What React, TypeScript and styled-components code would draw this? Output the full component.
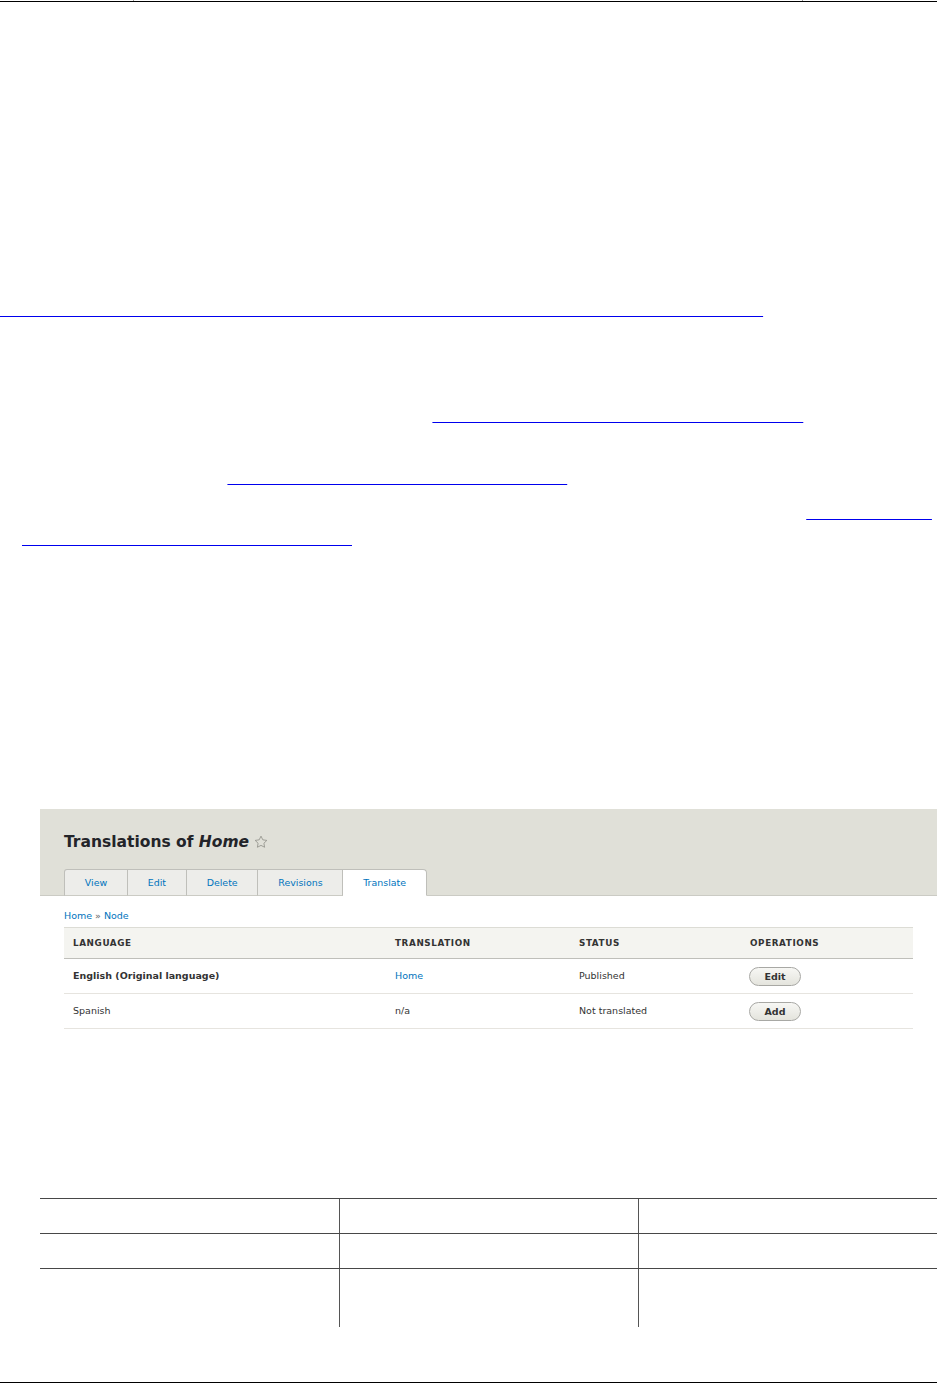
import React from 'react'
import styled, { createGlobalStyle } from 'styled-components'

const GlobalStyle = createGlobalStyle`
  html, body {
    margin: 0;
    padding: 0;
    background: #fff;
    overflow: hidden;
  }
  body {
    font-family: "Liberation Sans", Arial, sans-serif;
    font-size: 16px;
    line-height: 26px;
    color: transparent;
  }
`

const Page = styled.div`
  width: 937px;
`

/* remnant of the table that ends right at the top of the view */
const TopTable = styled.div`
  display: grid;
  grid-template-columns: 133px 669px 1fr;
  border-bottom: 1px solid #000;
`

const TopCell = styled.div<{ $first?: boolean }>`
  height: 1px;
  border-left: ${({ $first }) => ($first ? 'none' : '1px solid #9a9a9a')};
`

const Title = styled.h2`
  margin: 40px 0 20px;
  font-size: 28px;
  line-height: 36px;
  font-weight: bold;
`

const Para = styled.p<{ $mt?: number; $mb?: number }>`
  margin: ${({ $mt = 0 }) => $mt}px 0 ${({ $mb = 0 }) => $mb}px;
`

const SubTitle = styled.h3`
  margin: 36px 0 0;
  font-size: 22px;
  line-height: 30px;
`

const DocLink = styled.a`
  color: transparent;
  text-decoration: underline;
  text-decoration-color: #0000ee;
  text-decoration-skip-ink: none;
`

const Steps = styled.ol`
  margin: 0;
  padding: 0 0 0 22px;
  list-style: none;
`

const Step = styled.li`
  margin-bottom: 9.5px;
`

/* embedded screenshot of the translate tab */
const Shot = styled.figure`
  margin: 67px 0 0 40px;
  width: 897px;
  font-family: "DejaVu Sans", Verdana, sans-serif;
  color: #333;
  background: #fff;
`

const ShotHeader = styled.div`
  background: #e0e0d8;
  padding: 23px 24px 0;
  border-bottom: 1px solid #cbcbc4;
`

const ShotTitle = styled.h1`
  margin: 0;
  display: flex;
  align-items: center;
  gap: 5px;
  font-size: 15.5px;
  line-height: 20px;
  font-weight: bold;
  color: #232429;

  em {
    font-style: italic;
  }
`

const Tabs = styled.div`
  display: flex;
  margin: 17px 0 -1px;
`

const Tab = styled.span<{ $active?: boolean; $first?: boolean; $last?: boolean }>`
  display: flex;
  align-items: center;
  box-sizing: border-box;
  height: 27px;
  padding: 0 19.8px;
  font-size: 9.45px;
  color: #0074bd;
  background: ${({ $active }) => ($active ? '#fff' : '#ededea')};
  border: 1px solid #bfbfba;
  border-left-width: ${({ $first }) => ($first ? '1px' : '0')};
  border-bottom-color: ${({ $active }) => ($active ? '#fff' : '#cbcbc4')};
  border-radius: ${({ $first, $last }) => ($first ? '3px 0 0 0' : $last ? '0 4px 0 0' : '0')};
`

const ShotBody = styled.div`
  padding: 12px 24px 30px;
`

const Crumbs = styled.div`
  font-size: 9.5px;
  line-height: 15px;
  color: #0074bd;
`

const CrumbSep = styled.span`
  color: #666;
  margin: 0 3px;
`

const TransTable = styled.div`
  margin-top: 4px;
`

const TransRow = styled.div<{ $head?: boolean }>`
  display: grid;
  grid-template-columns: 322px 184px 171px 1fr;
  align-items: center;
  box-sizing: border-box;
  height: ${({ $head }) => ($head ? '32px' : '35px')};
  background: ${({ $head }) => ($head ? '#f4f4f0' : '#fff')};
  border-top: ${({ $head }) => ($head ? '1px solid #dcdcd5' : 'none')};
  border-bottom: 1px solid ${({ $head }) => ($head ? '#bfbfba' : '#e6e4df')};
`

const TransCell = styled.div<{ $head?: boolean; $bold?: boolean; $link?: boolean }>`
  padding-left: 9px;
  font-size: ${({ $head }) => ($head ? '8.8px' : '9.5px')};
  letter-spacing: ${({ $head }) => ($head ? '0.6px' : '0')};
  text-transform: ${({ $head }) => ($head ? 'uppercase' : 'none')};
  font-weight: ${({ $head, $bold }) => ($head || $bold ? 'bold' : 'normal')};
  color: ${({ $link }) => ($link ? '#0074bd' : '#333')};
`

const OpButton = styled.button`
  display: block;
  width: 52px;
  height: 19px;
  margin: 0 0 0 -1px;
  padding: 0;
  border: 1px solid #a8a8a4;
  border-radius: 10px;
  background: linear-gradient(#f7f7f4, #e4e4dd);
  font-family: "DejaVu Sans", Verdana, sans-serif;
  font-size: 9.5px;
  font-weight: bold;
  color: #333;
`

/* plain bordered table below the screenshot */
const DataTable = styled.div`
  margin-left: 40px;
  width: 897px;
`

const DataRow = styled.div`
  display: grid;
  grid-template-columns: repeat(3, 1fr);
  border-top: 1px solid #474747;
`

const DataCell = styled.div<{ $first?: boolean }>`
  padding: 5px 8px;
  line-height: 24px;
  border-left: ${({ $first }) => ($first ? 'none' : '1px solid #555')};
`

const Footer = styled.div`
  margin-top: 55px;
  border-top: 1px solid #000;
`

const Star = () => (
  <svg width="14" height="14" viewBox="0 0 24 24" fill="none" stroke="#8f8f88" strokeWidth="1.4" strokeLinejoin="round">
    <polygon points="12,2 15.09,8.26 22,9.27 17,14.14 18.18,21.02 12,17.77 5.82,21.02 7,14.14 2,9.27 8.91,8.26" />
  </svg>
)

const tabs = ['View', 'Edit', 'Delete', 'Revisions', 'Translate']

const rows = [
  { language: 'English (Original language)', original: true, translation: 'Home', status: 'Published', op: 'Edit' },
  { language: 'Spanish', original: false, translation: 'n/a', status: 'Not translated', op: 'Add' },
]

const App: React.FC = () => (
  <Page>
    <GlobalStyle />
    <TopTable>
      <TopCell $first />
      <TopCell />
      <TopCell />
    </TopTable>

    <Title>Translating content</Title>
    <Para $mb={16}>
      Drupal ships with a set of multilingual modules that let you present your site in more than one language.
      <br />
      The Content Translation module allows you to translate content entities such as nodes, taxonomy terms,
      <br />
      blocks and users, so that every piece of content can be offered in each of the enabled site languages.
    </Para>
    <Para $mb={26.5}>
      Before translating content you need to enable the Language and Content Translation modules, add at least
      <br />
      one additional language and mark the content types and fields that should be translatable. The official
      <br />
      guide covers each of these steps in detail:
    </Para>
    <Para $mb={9.5}>
      <DocLink href="#guide">
        Multilingual guide: translating site interfaces, configurations and content in Drupal 8, 9, 10 and later versions
      </DocLink>
    </Para>

    <Steps>
      <Step>Install and enable the Language, Interface Translation and Content Translation modules.</Step>
      <Step>Add the languages you need at Configuration » Regional and language » Languages.</Step>
      <Step>
        Next, mark each content type as translatable on the site's{' '}
        <DocLink href="#settings">Content languages and translation settings overview</DocLink> and
        <br />
        choose which fields can be translated; untranslatable fields are shared between all translations.
      </Step>
      <Step>
        For more details, refer to the{' '}
        <DocLink href="#languages">Adding and configuring site languages in Drupal</DocLink>.
      </Step>
      <Step>
        Once the configuration is complete, open any node and use its Translate tab to add translations, see the
        guide{' '}
        <DocLink href="#translating">
          Translating all the
          <br />
          content using the Content Translation modules
        </DocLink>
        .
      </Step>
    </Steps>

    <Para $mt={20}>
      The Translate tab lists every enabled language together with the current state of its translation. The
      <br />
      original language is marked as such, and each other language offers an operation to add or edit the
      <br />
      translation. Translations are stored as part of the same node, so they share the node ID, the path alias
      <br />
      settings and every field that has not been marked as translatable.
    </Para>
    <SubTitle>Example</SubTitle>

    <Shot>
      <ShotHeader>
        <ShotTitle>
          <span>
            Translations of <em>Home</em>
          </span>
          <Star />
        </ShotTitle>
        <Tabs>
          {tabs.map((t, i) => (
            <Tab key={t} $first={i === 0} $last={i === tabs.length - 1} $active={t === 'Translate'}>
              {t}
            </Tab>
          ))}
        </Tabs>
      </ShotHeader>
      <ShotBody>
        <Crumbs>
          Home<CrumbSep>»</CrumbSep>Node
        </Crumbs>
        <TransTable>
          <TransRow $head>
            <TransCell $head>Language</TransCell>
            <TransCell $head>Translation</TransCell>
            <TransCell $head>Status</TransCell>
            <TransCell $head>Operations</TransCell>
          </TransRow>
          {rows.map((r) => (
            <TransRow key={r.language}>
              <TransCell $bold={r.original}>{r.language}</TransCell>
              <TransCell $link={r.original}>{r.translation}</TransCell>
              <TransCell>{r.status}</TransCell>
              <TransCell>
                <OpButton type="button">{r.op}</OpButton>
              </TransCell>
            </TransRow>
          ))}
        </TransTable>
      </ShotBody>
    </Shot>

    <Para $mt={28} $mb={33}>
      The operations available for each language depend on the permissions of the current user:
      <br />
      translators can add and edit translations, while deleting them requires an additional permission.
      <br />
      The table below summarises the permissions involved.
    </Para>

    <DataTable>
      <DataRow>
        <DataCell $first>Permission</DataCell>
        <DataCell>Operation</DataCell>
        <DataCell>Notes</DataCell>
      </DataRow>
      <DataRow>
        <DataCell $first>Create translations</DataCell>
        <DataCell>Add</DataCell>
        <DataCell>Per content type</DataCell>
      </DataRow>
      <DataRow>
        <DataCell $first>
          Edit translations
          <br />
          Delete translations
        </DataCell>
        <DataCell>
          Edit
          <br />
          Delete
        </DataCell>
        <DataCell>
          Also needs the edit permission
          <br />
          for the content type
        </DataCell>
      </DataRow>
    </DataTable>

    <Footer />
  </Page>
)

export default App
